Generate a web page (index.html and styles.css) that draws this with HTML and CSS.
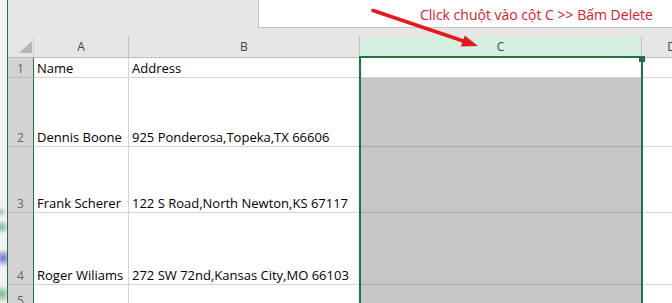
FILE: index.html
```html
<!DOCTYPE html>
<html lang="vi">
<head>
<meta charset="utf-8">
<title>Sheet</title>
<link rel="stylesheet" href="styles.css">
</head>
<body>
<div class="page">
  <div class="edge"></div>
  <div class="main">
    <div class="top"><div class="formula"></div></div>
    <div class="grid">
      <div class="corner"><span class="tri"></span></div>
      <div class="ch">A</div>
      <div class="ch">B</div>
      <div class="ch sel">C</div>
      <div class="ch">D</div>

      <div class="rh">1</div>
      <div class="cell">Name</div>
      <div class="cell">Address</div>
      <div class="cell"></div>
      <div class="cell"></div>

      <div class="rh">2</div>
      <div class="cell">Dennis Boone</div>
      <div class="cell">925 Ponderosa,Topeka,TX 66606</div>
      <div class="cell hl"></div>
      <div class="cell"></div>

      <div class="rh">3</div>
      <div class="cell">Frank Scherer</div>
      <div class="cell">122 S Road,North Newton,KS 67117</div>
      <div class="cell hl"></div>
      <div class="cell"></div>

      <div class="rh">4</div>
      <div class="cell">Roger Wiliams</div>
      <div class="cell">272 SW 72nd,Kansas City,MO 66103</div>
      <div class="cell hl"></div>
      <div class="cell"></div>

      <div class="rh">5</div>
      <div class="cell"></div>
      <div class="cell"></div>
      <div class="cell hl"></div>
      <div class="cell"></div>
    </div>
    <div class="selection"><span class="handle"></span></div>
  </div>
  <div class="note">Click chuột vào cột C &gt;&gt; Bấm Delete</div>
  <svg class="arrow" width="672" height="60" viewBox="0 0 672 60">
    <line x1="373" y1="10.5" x2="464" y2="41.3" stroke="#e3191c" stroke-width="3.6" stroke-linecap="round"/>
    <polygon points="478,46 460.8,46.4 464.8,35.4" fill="#e3191c"/>
  </svg>
</div>
</body>
</html>
```

FILE: styles.css
```css
* { box-sizing: border-box; }
html, body { margin: 0; padding: 0; }
body {
  width: 672px;
  height: 303px;
  overflow: hidden;
  background: #e6e6e6;
  font-family: "Open Sans", "Liberation Sans", sans-serif;
}
.page {
  position: relative;
  display: flex;
  width: 672px;
  height: 303px;
  overflow: hidden;
}
.edge {
  width: 7px;
  flex: none;
  background:
    radial-gradient(circle at 2px 227px, #7fb7b0 0, rgba(127,183,176,0) 7px),
    radial-gradient(circle at 3px 258px, #6e6fd0 0, rgba(110,111,208,0) 9px),
    radial-gradient(circle at 2px 294px, #79b889 0, rgba(121,184,137,0) 9px),
    radial-gradient(circle at 1px 212px, #b8c4c4 0, rgba(184,196,196,0) 6px),
    #f0f1f1;
}
.main {
  position: relative;
  flex: 1;
  border-left: 1px solid #217346;
  overflow: hidden;
  background: #e6e6e6;
}
.top {
  height: 37px;
  display: flex;
}
.formula {
  margin-left: 250px;
  flex: 1;
  height: 28px;
  background: #fff;
  border-left: 1px solid #c6c6c6;
  border-bottom: 1px solid #c6c6c6;
}
.grid {
  display: grid;
  grid-template-columns: 26px 95px 231px 282px 60px;
  grid-template-rows: 21px 20px 69px 66px 72px 25px;
  width: 694px;
}
.corner {
  background: #e6e6e6;
  border-bottom: 1px solid #bdbdbd;
  border-right: 1px solid #cfcfcf;
  display: flex;
  align-items: flex-end;
  justify-content: flex-end;
  padding: 0 1px 4px 0;
}
.tri {
  width: 0;
  height: 0;
  border-left: 13px solid transparent;
  border-bottom: 12px solid #b5b5b5;
}
.ch {
  background: #e6e6e6;
  border-right: 1px solid #c2c2c2;
  border-bottom: 1px solid #bdbdbd;
  color: #444;
  font-size: 12px;
  line-height: 18px;
  text-align: center;
  padding-top: 1px;
}
.ch.sel {
  background: #d3f0e0;
  color: #3c4a42;
}
.rh {
  background: #d4d4d4;
  border-right: 1px solid #217346;
  border-bottom: 1px solid #bcbcbc;
  color: #666;
  font-size: 12px;
  line-height: 17px;
  display: flex;
  align-items: flex-end;
  justify-content: center;
  padding-bottom: 0;
}
.cell {
  background: #fff;
  border-right: 1px solid #d4d4d4;
  border-bottom: 1px solid #d4d4d4;
  color: #000;
  font-size: 13px;
  line-height: 18px;
  display: flex;
  align-items: flex-end;
  padding: 0 0 0 3px;
  white-space: nowrap;
  overflow: hidden;
}
.cell.hl {
  background: #c6c6c6;
  border-bottom-color: #a9a9a9;
  border-right-color: #c6c6c6;
}
.selection {
  position: absolute;
  left: 351px;
  top: 56px;
  width: 284px;
  height: 260px;
  border: 2px solid #217346;
}
.handle {
  position: absolute;
  left: 278px;
  top: -2px;
  width: 6px;
  height: 6px;
  background: #217346;
}
.note {
  position: absolute;
  left: 420px;
  top: 5px;
  font-family: "Open Sans", "Liberation Sans", sans-serif;
  font-size: 14px;
  line-height: 19px;
  color: #d9202a;
  white-space: nowrap;
}
.arrow {
  position: absolute;
  left: 0;
  top: 0;
}
```
